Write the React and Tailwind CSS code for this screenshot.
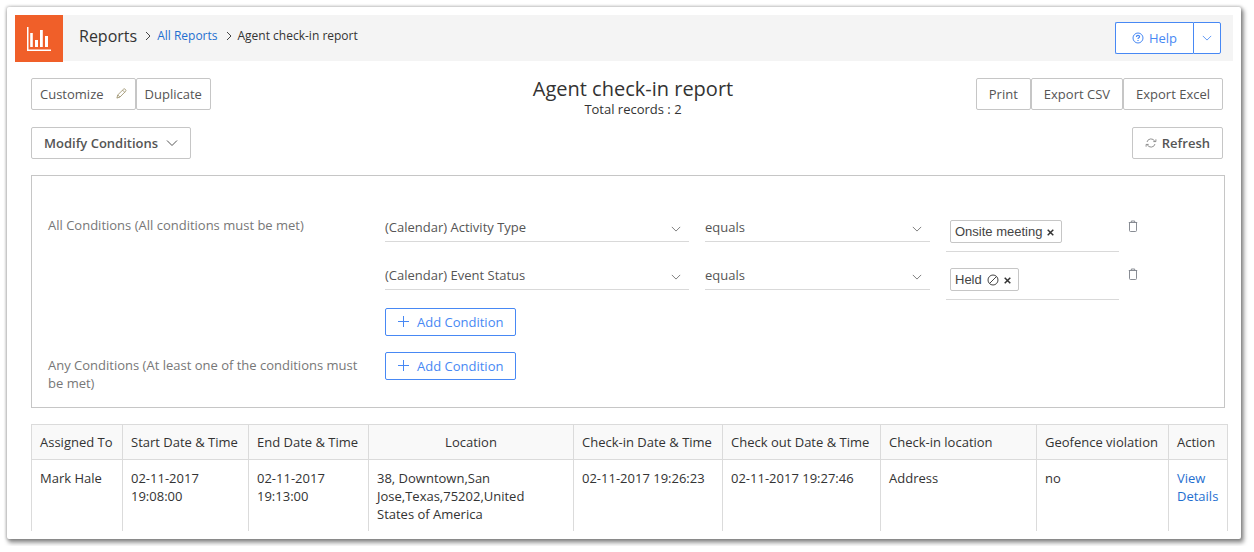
import React from "react";

const sans = "font-['Open_Sans','Noto_Sans',sans-serif]";
const greyButton =
  "inline-flex h-8 items-center rounded-xs border border-[#c6c6c6] bg-white pt-px text-[13px] text-[#555]";

function Chevron({ className }) {
  return (
    <svg viewBox="0 0 12 12" className={className} fill="none" stroke="currentColor" aria-hidden="true">
      <path d="M1 3.5l5 5 5-5" />
    </svg>
  );
}

function Separator() {
  return (
    <svg viewBox="0 0 6 10" className="h-2.5 w-1.5 text-[#444]" fill="none" stroke="currentColor" aria-hidden="true">
      <path d="M1 1l4 4-4 4" />
    </svg>
  );
}

function ChartIcon() {
  return (
    <svg viewBox="0 0 24 24" className="size-6" fill="#fff" aria-hidden="true">
      <path d="M0 0h1.5v22.500H24V24H0z" />
      <path d="M3.2 6h2.6v14H3.2zM8 13h3v7H8zM13 3h2.8v17H13zM18 9h3v11h-3z" />
    </svg>
  );
}

function PencilIcon() {
  return (
    <svg viewBox="0 0 12 12" className="size-[11px] -translate-y-px" fill="none" stroke="#8d8157" strokeWidth="0.8" strokeLinejoin="round" aria-hidden="true">
      <path d="M1 11l.9-3.4L8.2 1.3Q9.1.4 10.2 1.5 11.4 2.7 10.5 3.6L4.3 9.9z" />
      <path d="M1.9 7.6l2.4 2.3M7.2 2.3l2.3 2.4" />
    </svg>
  );
}

function HelpIcon() {
  return (
    <svg viewBox="0 0 12 12" className="size-3 -translate-y-px" fill="none" stroke="currentColor" aria-hidden="true">
      <circle cx="6" cy="6" r="5" />
      <path d="M4.4 4.9c0-1.9 3.2-1.9 3.2-.1 0 1.1-1.6 1-1.6 2.2M6 7.9v1" strokeWidth="1.2" />
    </svg>
  );
}

function RefreshIcon() {
  return (
    <svg viewBox="0 0 12 10" className="h-2.5 w-3 -translate-y-px" fill="none" stroke="#777" strokeWidth="0.8" aria-hidden="true">
      <path d="M2 4A4.1 4.1 0 0 1 9.8 3.5M10 6A4.1 4.1 0 0 1 2.2 6.5" />
      <path d="M8.3 3.6h2.6V1.3M3.7 6.4H1.1v2.3" />
    </svg>
  );
}

function PlusIcon() {
  return (
    <svg viewBox="0 0 11 11" className="size-[11px] -translate-y-px" fill="none" stroke="currentColor" aria-hidden="true">
      <path d="M5.5 0v11M0 5.5h11" />
    </svg>
  );
}

function TrashIcon() {
  return (
    <svg viewBox="0 0 10 12" className="h-3 w-2.5" fill="none" stroke="#7c8088" strokeWidth="0.9" aria-hidden="true">
      <path d="M.8 2.5h8.4M3.3 2.3V1h3.4v1.3M1.5 2.5v8q0 1 1 1h5q1 0 1-1v-8" />
    </svg>
  );
}

function BanIcon() {
  return (
    <svg viewBox="0 0 12 12" className="size-3" fill="none" stroke="#444" aria-hidden="true">
      <circle cx="6" cy="6" r="5" />
      <path d="M2.5 9.5l7-7" />
    </svg>
  );
}

function CrossIcon() {
  return (
    <svg viewBox="0 0 7 7" className="size-[7px]" fill="none" stroke="#333" strokeWidth="1.5" aria-hidden="true">
      <path d="M.7.7l5.6 5.6M6.3.7L.7 6.3" />
    </svg>
  );
}

function SelectField({ label, value }) {
  return (
    <div className="relative">
      <select
        aria-label={label}
        defaultValue={value}
        className="block h-7 w-full appearance-none border-b border-[#d9d9d9] bg-white pr-8 text-[13px] text-[#555]"
      >
        <option>{value}</option>
      </select>
      <Chevron className="pointer-events-none absolute top-2.5 right-2 size-[10px] text-[#666]" />
    </div>
  );
}

function ConditionRow({ field, chip, banned }) {
  return (
    <div className="grid grid-cols-[304fr_225fr_173fr_73fr] items-start gap-x-4">
      <SelectField label="Field" value={field} />
      <SelectField label="Comparator" value="equals" />
      <div className="flex h-[38px] items-start border-b border-[#d9d9d9] px-1 pt-1.5">
        <span className="flex h-[23px] items-center gap-[5px] rounded-xs border border-[#c6c6c6] px-1 font-['Liberation_Sans',Arial,sans-serif] text-[13px] text-[#444]">
          {chip}
          {banned && <BanIcon />}
          <button type="button" aria-label={"Remove " + chip} className="mr-[3px] pt-0.5">
            <CrossIcon />
          </button>
        </span>
      </div>
      <button type="button" aria-label="Delete condition" className="-ml-[7px] w-3 pt-1.5">
        <TrashIcon />
      </button>
    </div>
  );
}

function AddCondition() {
  return (
    <button
      type="button"
      className="flex h-7 items-center gap-2 rounded-xs border border-[#4788f4] bg-white px-3 pt-px text-[13px] text-[#4788f4]"
    >
      <PlusIcon />
      Add Condition
    </button>
  );
}

const columns = [
  { title: "Assigned To", width: "w-[91px]" },
  { title: "Start Date & Time", width: "w-[126px]" },
  { title: "End Date & Time", width: "w-[120px]" },
  { title: "Location", width: "w-auto", align: "text-center" },
  { title: "Check-in Date & Time", width: "w-[149px]" },
  { title: "Check out Date & Time", width: "w-[158px]" },
  { title: "Check-in location", width: "w-[156px]" },
  { title: "Geofence violation", width: "w-[132px]" },
  { title: "Action", width: "w-[59px]" },
];

const rows = [
  [
    "Mark Hale",
    "02-11-2017 19:08:00",
    "02-11-2017 19:13:00",
    "38, Downtown,San Jose,Texas,75202,United States of America",
    "02-11-2017 19:26:23",
    "02-11-2017 19:27:46",
    "Address",
    "no",
  ],
];

export default function App() {
  return (
    <div className={"bg-white py-[7px] pr-[13px] pl-[7px] text-[13px] text-[#333] " + sans}>
      <div className="rounded-xs bg-white pt-2 pb-2 shadow-[0_0_3px_1px_rgba(0,0,0,0.2),2px_3px_4px_1px_rgba(0,0,0,0.4)]">
        <header className="mx-2 flex h-[46px] items-center bg-[#f4f4f4]">
          <div className="-mb-px flex h-[47px] w-12 items-center justify-center bg-[#f05f29]">
            <ChartIcon />
          </div>
          <nav aria-label="Breadcrumb" className="ml-4 flex flex-1 items-center gap-[6px] pb-1">
            <h1 className="mr-0.5 text-base">Reports</h1>
            <Separator />
            <a href="#all-reports" className="mr-0.5 text-xs text-[#1f6fd0]">
              All Reports
            </a>
            <Separator />
            <span className="text-xs">Agent check-in report</span>
          </nav>
          <div className="mr-3 flex text-[#4788f4]">
            <button
              type="button"
              className="flex h-8 items-center gap-[5px] rounded-l-xs border border-r-0 border-[#4788f4] bg-white px-4 pt-px text-[13px]"
            >
              <HelpIcon />
              Help
            </button>
            <button
              type="button"
              aria-label="More help"
              className="flex h-8 w-7 items-center justify-center rounded-r-xs border border-[#4788f4] bg-white"
            >
              <Chevron className="size-[10px]" />
            </button>
          </div>
        </header>

        <main className="pr-1.5 pl-6">
          <div className="mt-[17px] grid grid-cols-[1fr_auto_1fr] items-start">
            <div className="flex">
              <button type="button" className={greyButton + " gap-3 px-2"}>
                Customize
                <PencilIcon />
              </button>
              <button type="button" className={greyButton + " px-2"}>
                Duplicate
              </button>
            </div>
            <div className="text-center">
              <h2 className="text-xl leading-[22px]">Agent check-in report</h2>
              <p className="leading-[18px]">Total records : 2</p>
            </div>
            <div className="mr-3 flex justify-end">
              <button type="button" className={greyButton + " px-3"}>Print</button>
              <button type="button" className={greyButton + " px-3"}>Export CSV</button>
              <button type="button" className={greyButton + " px-3"}>Export Excel</button>
            </div>
          </div>

          <div className="mt-[9px] mr-3 flex justify-between">
            <button type="button" className={greyButton + " gap-2 px-3 font-semibold"}>
              Modify Conditions
              <Chevron className="size-3 -translate-y-px" />
            </button>
            <button type="button" className={greyButton + " gap-[5px] px-3 font-semibold"}>
              <RefreshIcon />
              Refresh
            </button>
          </div>

          <section className="mt-4 mr-[10px] border border-[#c6c6c6] px-4 pt-[38px] pb-[27px]">
            <div className="flex">
              <p className="w-[337px] shrink-0 pt-0.5 leading-[18px] text-[#777]">
                All Conditions (All conditions must be met)
              </p>
              <div className="flex-1">
                <div className="mb-2 space-y-2.5">
                  <ConditionRow field="(Calendar) Activity Type" chip="Onsite meeting" />
                  <ConditionRow field="(Calendar) Event Status" chip="Held" banned />
                </div>
                <AddCondition />
              </div>
            </div>
            <div className="mt-4 flex h-7">
              <p className="w-[337px] shrink-0 pt-1 pr-4 leading-[18px] text-[#777]">
                Any Conditions (At least one of the conditions must be met)
              </p>
              <AddCondition />
            </div>
          </section>

          <div className="mt-4 mr-[7px]">
            <table className="w-full table-fixed border-collapse border-x border-t border-[#dbdbdb]">
              <thead>
                <tr className="h-[35px] bg-[#f9f9f9]">
                  {columns.map((c) => (
                    <th
                      key={c.title}
                      scope="col"
                      className={
                        "border border-[#dbdbdb] px-2 pt-0.5 font-medium whitespace-nowrap " + c.width + " " + (c.align || "text-left")
                      }
                    >
                      {c.title}
                    </th>
                  ))}
                </tr>
              </thead>
              <tbody>
                {rows.map((row) => (
                  <tr key={row[0]} className="h-[71px] align-top leading-[18px]">
                    {row.map((cell, i) => (
                      <td key={i} className={"border-x border-[#dbdbdb] pt-[9px] pl-2 " + (i === 3 ? "pr-10" : "pr-1")}>
                        {cell}
                      </td>
                    ))}
                    <td className="border-x border-[#dbdbdb] px-2 pt-[9px]">
                      <a href="#details" className="text-[#1f6fd0]">
                        View Details
                      </a>
                    </td>
                  </tr>
                ))}
              </tbody>
            </table>
          </div>
        </main>
      </div>
    </div>
  );
}
